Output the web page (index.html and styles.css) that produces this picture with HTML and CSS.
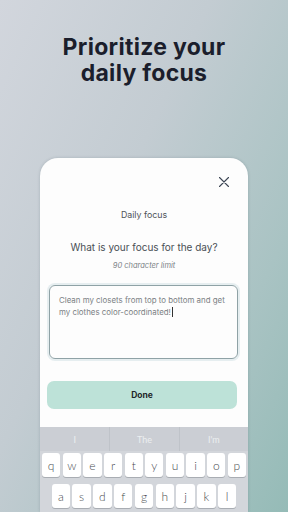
FILE: index.html
```html
<!DOCTYPE html>
<html>
<head>
<meta charset="utf-8">
<link rel="stylesheet" href="styles.css">
</head>
<body>
<div class="screen">
  <h1 class="title">Prioritize your<br>daily focus</h1>
  <div class="card">
    <div class="close-row">
      <svg class="close" viewBox="0 0 10 10" width="10" height="10"><path d="M0.5 0.5L9.5 9.5M9.5 0.5L0.5 9.5" stroke="#3d4654" stroke-width="1.1" fill="none" stroke-linecap="round"/></svg>
    </div>
    <div class="label">Daily focus</div>
    <div class="question">What is your focus for the day?</div>
    <div class="hint">90 character limit</div>
    <div class="input">Clean my closets from top to bottom and get my clothes color-coordinated!<span class="caret"></span></div>
    <div class="done">Done</div>
    <div class="keyboard">
      <div class="suggest">
        <div class="sug">I</div>
        <div class="sug">The</div>
        <div class="sug">I'm</div>
      </div>
      <div class="row">
        <span class="key">q</span><span class="key">w</span><span class="key">e</span><span class="key">r</span><span class="key">t</span><span class="key">y</span><span class="key">u</span><span class="key">i</span><span class="key">o</span><span class="key">p</span>
      </div>
      <div class="row">
        <span class="key">a</span><span class="key">s</span><span class="key">d</span><span class="key">f</span><span class="key">g</span><span class="key">h</span><span class="key">j</span><span class="key">k</span><span class="key">l</span>
      </div>
    </div>
  </div>
</div>
</body>
</html>
```
FILE: styles.css
```css
* { box-sizing: border-box; margin: 0; padding: 0; }
html, body { width: 288px; height: 512px; overflow: hidden; }
body {
  font-family: Inter, "Noto Sans", sans-serif;
}
.screen {
  width: 288px;
  height: 512px;
  overflow: hidden;
  background: linear-gradient(115deg, #d2d6dd 0%, #c3ccd2 40%, #a9c3c3 75%, #95bbb7 100%);
  display: flex;
  flex-direction: column;
  align-items: center;
}
.title {
  padding-top: 34px;
  font-size: 23px;
  line-height: 26px;
  font-weight: 700;
  color: #1b1e2c;
  text-align: center;
  letter-spacing: 0.3px;
}
.card {
  margin-top: 72px;
  width: 208px;
  flex: 1;
  background: #fdfdfd;
  border-radius: 18px 18px 0 0;
  box-shadow: 0 0 3px rgba(60, 80, 90, 0.25);
  display: flex;
  flex-direction: column;
  overflow: hidden;
}
.close-row {
  display: flex;
  justify-content: flex-end;
  padding: 19px 19px 0 0;
}
.close { display: block; }
.label {
  margin-top: 22px;
  text-align: center;
  font-size: 8.8px;
  line-height: 12px;
  color: #4f5459;
}
.question {
  margin-top: 19px;
  text-align: center;
  font-size: 10px;
  line-height: 14px;
  color: #4a4f55;
}
.hint {
  margin-top: 7px;
  text-align: center;
  font-size: 7.5px;
  line-height: 10px;
  font-style: italic;
  color: #7a7f85;
}
.input {
  margin: 14px 0 0 9px;
  width: 189px;
  height: 74px;
  border: 1px solid #8fa2a6;
  border-radius: 6px;
  box-shadow: 0 0 0 2px #e6eef0;
  padding: 8px 9px;
  font-size: 7.9px;
  line-height: 12px;
  color: #7b7f84;
}
.caret {
  display: inline-block;
  width: 1px;
  height: 10px;
  background: #333;
  vertical-align: -2px;
  margin-left: 1px;
}
.done {
  margin: 22px 0 0 7px;
  width: 190px;
  height: 28px;
  border-radius: 7px;
  background: #bde2d8;
  display: flex;
  align-items: center;
  justify-content: center;
  font-size: 8.5px;
  font-weight: 700;
  color: #1f2628;
}
.keyboard {
  margin-top: 18px;
  flex: 1;
  background: #d3d6db;
}
.suggest {
  display: grid;
  grid-template-columns: 1fr 1fr 1fr;
  height: 24px;
  background: #cbced4;
}
.sug {
  display: flex;
  align-items: center;
  justify-content: center;
  font-family: Lato, "Noto Sans", sans-serif;
  font-size: 9px;
  color: #eceef1;
  border-left: 1px solid #bfc3c9;
}
.sug:first-child { border-left: none; }
.row {
  display: flex;
  justify-content: center;
  gap: 2.4px;
  margin-top: 2px;
  padding: 0 2px;
}
.row + .row { margin-top: 7px; }
.key {
  width: 18.4px;
  height: 24px;
  background: #ffffff;
  border-radius: 3px;
  box-shadow: 0 1px 0 #a9adb3;
  display: flex;
  align-items: center;
  justify-content: center;
  font-family: Lato, "Noto Sans", sans-serif;
  font-weight: 300;
  font-size: 12px;
  color: #474a4f;
}
```
